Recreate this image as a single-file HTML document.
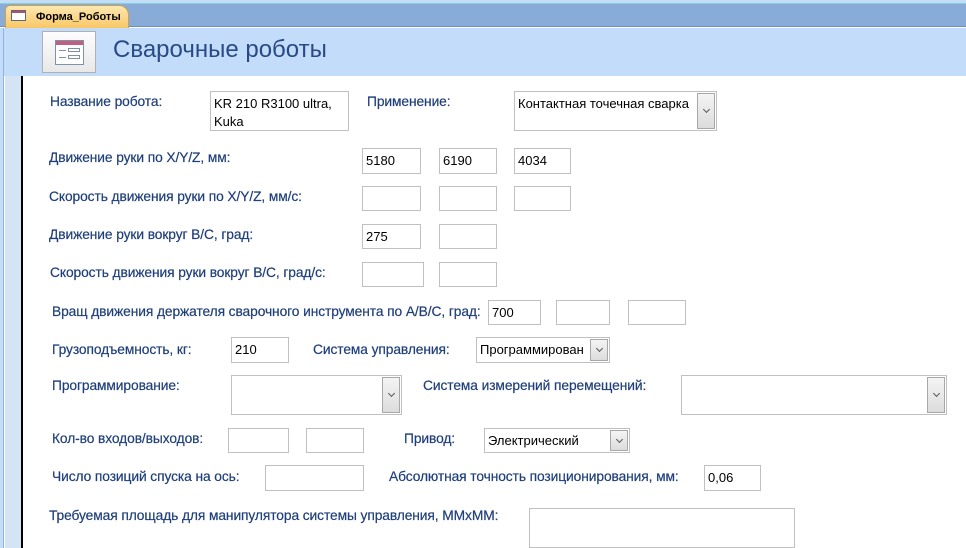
<!DOCTYPE html>
<html><head><meta charset="utf-8"><style>
*{margin:0;padding:0;box-sizing:border-box}
body{width:966px;height:548px;position:relative;overflow:hidden;background:#fff;font-family:"Liberation Sans","DejaVu Sans",sans-serif}
.a{position:absolute}
.l{position:absolute;color:#1f3f7a;font-size:13.8px;white-space:nowrap;letter-spacing:-0.1px;-webkit-text-stroke:0.2px #1f3f7a}
.b{position:absolute;border:1px solid #c0c0c0;background:#fff;font-size:13px;color:#000;padding:3px 0 0 3px;line-height:18px;white-space:nowrap}
.btn{position:absolute;right:1px;top:1px;width:18px;border:1px solid #a8a8a8;background:linear-gradient(#f4f4f4,#dcdcdc)}
.btn:after{content:"";position:absolute;left:6px;top:50%;margin-top:-4px;width:4px;height:4px;border-right:1.5px solid #555;border-bottom:1.5px solid #555;transform:rotate(45deg)}
</style></head><body>
<div class="a" style="left:0;top:0;width:966px;height:4px;background:#c6dcf4;border-bottom:1px solid #7fd0e0"></div>
<div class="a" style="left:0;top:4px;width:966px;height:23px;background:#88abd8;border-bottom:1px solid #6c8fc0"></div>
<div class="a" style="left:5px;top:5px;width:124px;height:23px;background:linear-gradient(#fde8b0,#f8c766);border:1px solid #c9a24f;border-bottom:none;border-radius:5px 10px 0 0;font-size:11px;font-weight:bold;color:#000;padding:5px 0 0 30px">Форма_Роботы</div>
<div class="a" style="left:11px;top:10px;width:15px;height:11px;background:#fff;border:1px solid #667"><div class="a" style="left:0;top:0;width:13px;height:2px;background:#b05070"></div></div>
<div class="a" style="left:0;top:28px;width:966px;height:48px;background:#c2dcfa"></div>
<div class="a" style="left:0;top:28px;width:4px;height:520px;background:#c2dcfa;border-right:1px solid #8fb4e0"></div>
<div class="a" style="left:5px;top:76px;width:18px;height:472px;background:#d4e4f4;border-right:2px solid #000"></div>
<div class="a" style="left:42px;top:31px;width:54px;height:42px;background:linear-gradient(#fdfdfd,#e8e8e8);border:1px solid #b0b0b0"></div>
<div class="a" style="left:55px;top:40px;width:29px;height:25px;background:#fff;border:1px solid #8090a8">
 <div class="a" style="left:0;top:0;width:27px;height:4px;background:#c06080"></div>
 <div class="a" style="left:3px;top:9px;width:7px;height:1px;background:#8090a8"></div>
 <div class="a" style="left:12px;top:7px;width:12px;height:4px;border:1px solid #8090a8"></div>
 <div class="a" style="left:3px;top:16px;width:7px;height:1px;background:#8090a8"></div>
 <div class="a" style="left:12px;top:14px;width:12px;height:4px;border:1px solid #8090a8"></div>
</div>
<div class="a" style="left:113px;top:36px;font-size:24px;color:#2a4a86">Сварочные роботы</div>

<div class="l" style="left:50px;top:94px">Название робота:</div>
<div class="b" style="left:210px;top:91px;width:139px;height:40px">KR 210 R3100 ultra,<br>Kuka</div>
<div class="l" style="left:367px;top:94px">Применение:</div>
<div class="b" style="left:514px;top:91px;width:203px;height:40px;overflow:hidden">Контактная точечная сварка<div class="btn" style="height:36px"></div></div>

<div class="l" style="left:49px;top:150px">Движение руки по X/Y/Z, мм:</div>
<div class="b" style="left:362px;top:148px;width:59px;height:26px">5180</div>
<div class="b" style="left:439px;top:148px;width:58px;height:26px">6190</div>
<div class="b" style="left:514px;top:148px;width:57px;height:26px">4034</div>

<div class="l" style="left:49px;top:189px">Скорость движения руки по X/Y/Z, мм/с:</div>
<div class="b" style="left:362px;top:186px;width:59px;height:25px"></div>
<div class="b" style="left:439px;top:186px;width:58px;height:25px"></div>
<div class="b" style="left:514px;top:186px;width:57px;height:25px"></div>

<div class="l" style="left:49px;top:227px">Движение руки вокруг В/С, град:</div>
<div class="b" style="left:362px;top:224px;width:59px;height:25px">275</div>
<div class="b" style="left:439px;top:224px;width:58px;height:25px"></div>

<div class="l" style="left:50px;top:265px">Скорость движения руки вокруг В/С, град/с:</div>
<div class="b" style="left:362px;top:262px;width:62px;height:25px"></div>
<div class="b" style="left:439px;top:262px;width:58px;height:25px"></div>

<div class="l" style="left:52px;top:304px">Вращ движения держателя сварочного инструмента по A/B/C, град:</div>
<div class="b" style="left:488px;top:300px;width:53px;height:25px">700</div>
<div class="b" style="left:556px;top:300px;width:54px;height:25px"></div>
<div class="b" style="left:628px;top:300px;width:58px;height:25px"></div>

<div class="l" style="left:52px;top:342px">Грузоподъемность, кг:</div>
<div class="b" style="left:231px;top:337px;width:58px;height:26px">210</div>
<div class="l" style="left:313px;top:342px">Система управления:</div>
<div class="b" style="left:476px;top:337px;width:134px;height:26px;overflow:hidden">Программирован<div class="btn" style="height:22px"></div></div>

<div class="l" style="left:52px;top:378px">Программирование:</div>
<div class="b" style="left:231px;top:375px;width:171px;height:40px"><div class="btn" style="height:36px"></div></div>
<div class="l" style="left:423px;top:378px">Система измерений перемещений:</div>
<div class="b" style="left:681px;top:375px;width:266px;height:40px"><div class="btn" style="height:36px"></div></div>

<div class="l" style="left:52px;top:431px">Кол-во входов/выходов:</div>
<div class="b" style="left:228px;top:428px;width:61px;height:25px"></div>
<div class="b" style="left:306px;top:428px;width:58px;height:25px"></div>
<div class="l" style="left:404px;top:431px">Привод:</div>
<div class="b" style="left:484px;top:428px;width:146px;height:25px">Электрический<div class="btn" style="height:21px"></div></div>

<div class="l" style="left:52px;top:469px">Число позиций спуска на ось:</div>
<div class="b" style="left:265px;top:465px;width:99px;height:26px"></div>
<div class="l" style="left:389px;top:469px">Абсолютная точность позиционирования, мм:</div>
<div class="b" style="left:704px;top:465px;width:57px;height:26px">0,06</div>

<div class="l" style="left:49px;top:508px">Требуемая площадь для манипулятора системы управления, ММхММ:</div>
<div class="b" style="left:529px;top:508px;width:266px;height:40px"></div>
</body></html>
